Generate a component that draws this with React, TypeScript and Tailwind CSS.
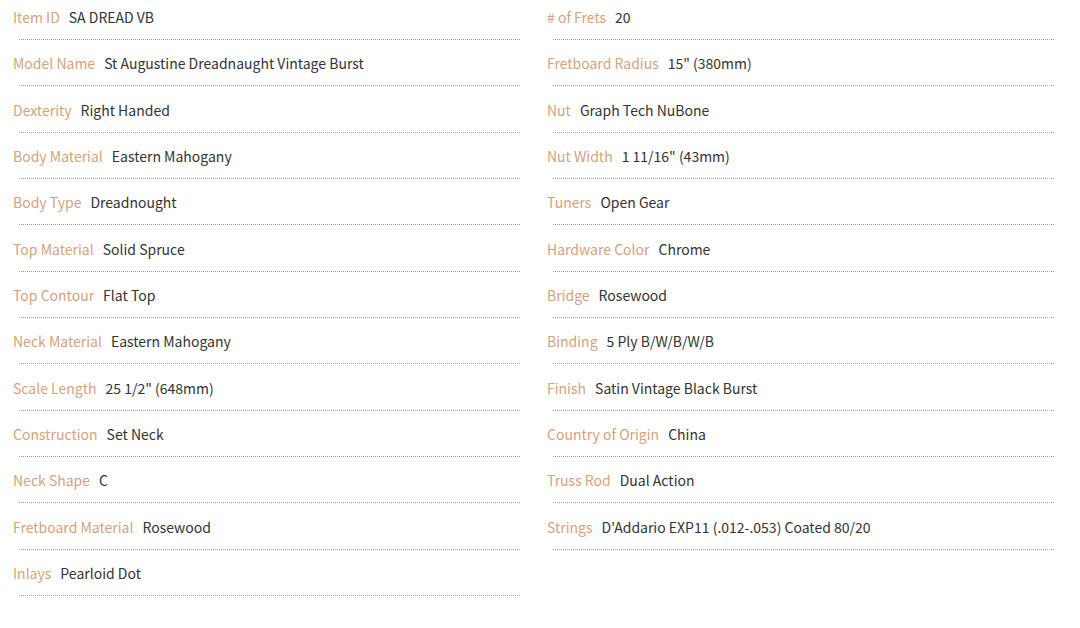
import React from "react";

const left: [string, string][] = [
  ["Item ID", "SA DREAD VB"],
  ["Model Name", "St Augustine Dreadnaught Vintage Burst"],
  ["Dexterity", "Right Handed"],
  ["Body Material", "Eastern Mahogany"],
  ["Body Type", "Dreadnought"],
  ["Top Material", "Solid Spruce"],
  ["Top Contour", "Flat Top"],
  ["Neck Material", "Eastern Mahogany"],
  ["Scale Length", "25 1/2\" (648mm)"],
  ["Construction", "Set Neck"],
  ["Neck Shape", "C"],
  ["Fretboard Material", "Rosewood"],
  ["Inlays", "Pearloid Dot"],
];

const right: [string, string][] = [
  ["# of Frets", "20"],
  ["Fretboard Radius", "15\" (380mm)"],
  ["Nut", "Graph Tech NuBone"],
  ["Nut Width", "1 11/16\" (43mm)"],
  ["Tuners", "Open Gear"],
  ["Hardware Color", "Chrome"],
  ["Bridge", "Rosewood"],
  ["Binding", "5 Ply B/W/B/W/B"],
  ["Finish", "Satin Vintage Black Burst"],
  ["Country of Origin", "China"],
  ["Truss Rod", "Dual Action"],
  ["Strings", "D'Addario EXP11 (.012-.053) Coated 80/20"],
];

function Row({ label, value }: { label: string; value: string }) {
  return (
    <div className="flex h-[46.33px] flex-col pt-[7px]">
      <div className="flex h-5 items-center gap-[9px] text-[14px] leading-5">
        <span className="text-[#d6a27b]">{label}</span>
        <span className="text-[#333333]">{value}</span>
      </div>
      <div className="ml-[6px] mt-3 border-b border-dotted border-[#9a9a9a]" />
    </div>
  );
}

export default function App() {
  return (
    <div
      className="flex h-[628px] w-[1080px] bg-white pl-[13px]"
      style={{ fontFamily: '"Noto Sans CJK KR", "Noto Sans", sans-serif' }}
    >
      <div className="flex w-[507px] flex-col">
        {left.map(([l, v]) => (
          <Row key={l} label={l} value={v} />
        ))}
      </div>
      <div className="ml-[27px] flex w-[507px] flex-col">
        {right.map(([l, v]) => (
          <Row key={l} label={l} value={v} />
        ))}
      </div>
    </div>
  );
}
